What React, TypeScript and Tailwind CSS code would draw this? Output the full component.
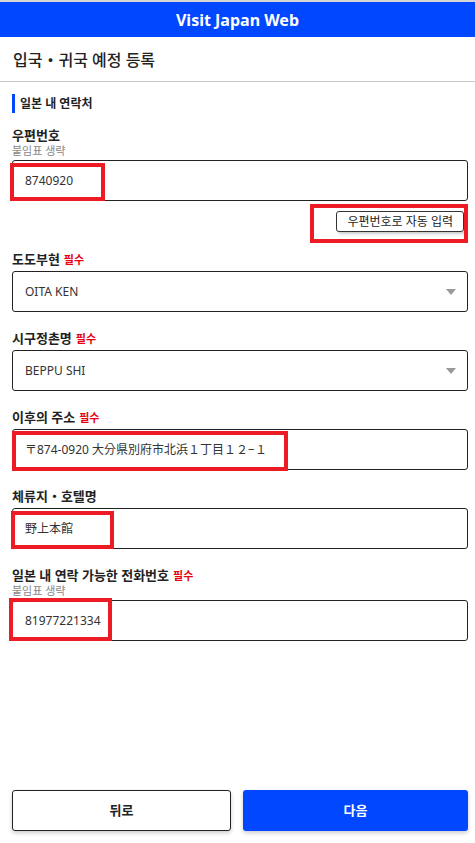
import React from "react";

const font = { fontFamily: '"Noto Sans", "Noto Sans CJK KR", sans-serif' };

function Label({ text, required, note }: { text: string; required?: boolean; note?: string }) {
  return (
    <div className="mb-[3px]">
      <div className="text-[13px] font-semibold leading-[17px] text-[#222]">
        {text}
        {required && <span className="ml-1 text-[11px] font-bold text-[#e60012]">필수</span>}
      </div>
      {note && <div className="text-[11px] leading-[13px] text-[#888]">{note}</div>}
    </div>
  );
}

function Box({ children, select }: { children: React.ReactNode; select?: boolean }) {
  return (
    <div className="flex h-[41px] items-center justify-between rounded-[3px] border border-[#222] bg-white pl-[12px] pr-[11px] text-[12px] text-[#333]">
      <span>{children}</span>
      {select && (
        <svg width="10" height="6" viewBox="0 0 10 6">
          <path d="M0 0h10L5 6z" fill="#999" />
        </svg>
      )}
    </div>
  );
}

function Mark({ className }: { className: string }) {
  return <div className={"pointer-events-none absolute border-[4px] border-[#ed1c24] " + className} />;
}

export default function App() {
  return (
    <div className="flex h-[843px] w-[475px] flex-col bg-white" style={font}>
      <div className="h-[2px] bg-[#d4d4d4]" />
      <div className="flex h-[35px] items-center justify-center bg-[#0047ff] text-[16px] font-bold text-white">
        Visit Japan Web
      </div>
      <div className="flex h-[45px] items-center border-b border-[#c8c8c8] pl-[13px] pt-[1px] text-[16px] font-medium text-[#222]">
        입국・귀국 예정 등록
      </div>

      <div className="flex flex-1 flex-col pl-3 pr-[7px]">
        <div className="mt-[12px] flex h-[19px] items-center border-l-[3px] border-[#0047ff] pl-[5px] text-[12px] font-semibold text-[#222]">
          일본 내 연락처
        </div>

        <div className="mt-[14px]">
          <Label text="우편번호" note="붙임표 생략" />
          <div className="relative">
            <Box>8740920</Box>
            <Mark className="-left-[2px] top-[3px] h-[38px] w-[95px]" />
          </div>
          <div className="relative mt-[10px] flex h-[21px] justify-end pr-[4px]">
            <div className="flex items-center rounded-[3px] border border-[#333] px-[10px] text-[12px] text-[#222] shadow-[2px_2px_3px_rgba(0,0,0,0.2)]">
              우편번호로 자동 입력
            </div>
            <Mark className="-top-[7px] right-0 h-[39px] w-[158px]" />
          </div>
        </div>

        <div className="mt-[19px]">
          <Label text="도도부현" required />
          <Box select>OITA KEN</Box>
        </div>

        <div className="mt-[18px]">
          <Label text="시구정촌명" required />
          <Box select>BEPPU SHI</Box>
        </div>

        <div className="mt-[18px]">
          <Label text="이후의 주소" required />
          <div className="relative">
            <Box>〒874-0920 大分県別府市北浜１丁目１２−１</Box>
            <Mark className="left-0 top-[2px] h-[40px] w-[276px]" />
          </div>
        </div>

        <div className="mt-[18px]">
          <Label text="체류지・호텔명" />
          <div className="relative">
            <Box>野上本館</Box>
            <Mark className="-left-[1px] top-[3px] h-[38px] w-[103px]" />
          </div>
        </div>

        <div className="mt-[18px]">
          <Label text="일본 내 연락 가능한 전화번호" required note="붙임표 생략" />
          <div className="relative">
            <Box>81977221334</Box>
            <Mark className="-left-[3px] -top-[2px] h-[43px] w-[103px]" />
          </div>
        </div>

        <div className="mt-auto mb-[12px] flex gap-3">
          <div className="flex h-[41px] w-[219px] items-center justify-center rounded-[3px] border border-[#222] bg-white text-[13px] font-semibold text-[#222] shadow-[0_2px_4px_rgba(0,0,0,0.2)]">
            뒤로
          </div>
          <div className="flex h-[41px] flex-1 items-center justify-center rounded-[3px] bg-[#0047ff] text-[13px] font-semibold text-white shadow-[0_2px_4px_rgba(0,0,0,0.2)]">
            다음
          </div>
        </div>
      </div>
    </div>
  );
}
